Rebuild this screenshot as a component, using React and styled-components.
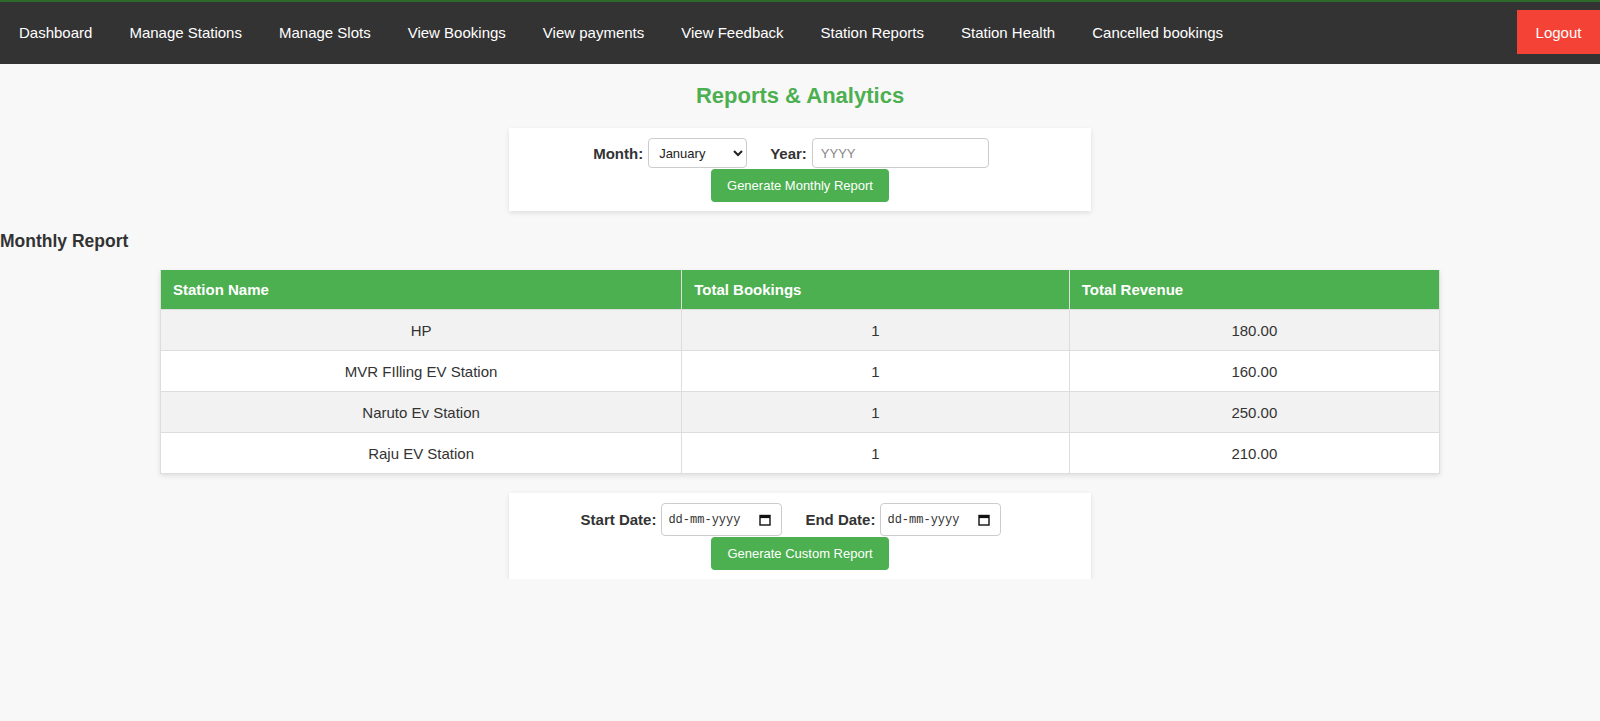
import React, { useState } from "react";
import styled, { createGlobalStyle } from "styled-components";

const links = [
  "Dashboard",
  "Manage Stations",
  "Manage Slots",
  "View Bookings",
  "View payments",
  "View Feedback",
  "Station Reports",
  "Station Health",
  "Cancelled bookings",
];

const rows = [
  { name: "HP", bookings: 1, revenue: "180.00" },
  { name: "MVR FIlling EV Station", bookings: 1, revenue: "160.00" },
  { name: "Naruto Ev Station", bookings: 1, revenue: "250.00" },
  { name: "Raju EV Station", bookings: 1, revenue: "210.00" },
];

const months = [
  "January", "February", "March", "April", "May", "June",
  "July", "August", "September", "October", "November", "December",
];

const CalendarIcon = () => (
  <svg width="12" height="12" viewBox="0 0 12 12">
    <rect x="1" y="1.5" width="10" height="9.5" fill="none" stroke="#111" strokeWidth="1.4" />
    <rect x="1" y="1.5" width="10" height="2.6" fill="#111" />
  </svg>
);

const DateField = () => (
  <DateBox>
    <DateText placeholder="dd-mm-yyyy" />
    <CalendarIcon />
  </DateBox>
);

const App = () => {
  const [month, setMonth] = useState("January");

  return (
    <>
      <GlobalStyle />
      <Nav>
        <Links>
          {links.map((l) => (
            <NavLink key={l} href="#">
              {l}
            </NavLink>
          ))}
        </Links>
        <Logout>Logout</Logout>
      </Nav>

      <Title>Reports &amp; Analytics</Title>

      <Card>
        <FormRow>
          <Label>Month:</Label>
          <Select value={month} onChange={(e) => setMonth(e.target.value)}>
            {months.map((m) => (
              <option key={m}>{m}</option>
            ))}
          </Select>
          <Label $gap>Year:</Label>
          <YearInput placeholder="YYYY" />
        </FormRow>
        <GreenButton>Generate Monthly Report</GreenButton>
      </Card>

      <Heading>Monthly Report</Heading>

      <Table>
        <colgroup>
          <col style={{ width: "40.75%" }} />
          <col style={{ width: "30.3%" }} />
          <col />
        </colgroup>
        <thead>
          <tr>
            <Th>Station Name</Th>
            <Th>Total Bookings</Th>
            <Th>Total Revenue</Th>
          </tr>
        </thead>
        <tbody>
          {rows.map((r, i) => (
            <Tr key={i} $odd={i % 2 === 0}>
              <Td>{r.name}</Td>
              <Td>{r.bookings}</Td>
              <Td>{r.revenue}</Td>
            </Tr>
          ))}
        </tbody>
      </Table>

      <Card $second>
        <FormRow>
          <Label>Start Date:</Label>
          <DateField />
          <Label $gap>End Date:</Label>
          <DateField />
        </FormRow>
        <GreenButton>Generate Custom Report</GreenButton>
      </Card>
    </>
  );
};

const GlobalStyle = createGlobalStyle`
  body {
    margin: 0;
    background: #f8f8f8;
    font-family: "Liberation Sans", Arial, sans-serif;
    color: #333;
  }
`;

const Nav = styled.nav`
  height: 62px;
  background: #333;
  border-top: 2px solid #2e6b2a;
  display: flex;
  align-items: center;
  justify-content: space-between;
`;

const Links = styled.div`
  display: flex;
  align-items: center;
  padding-left: 0.5px;
  margin-top: -2px;
`;

const NavLink = styled.a`
  color: #fff;
  text-decoration: none;
  font-size: 15px;
  padding: 0 18.5px;
`;

const Logout = styled.button`
  background: #f44336;
  color: #fff;
  border: none;
  font-family: inherit;
  font-size: 15px;
  width: 83px;
  height: 44px;
  margin-top: -2px;
  cursor: pointer;
`;

const Title = styled.h2`
  color: #4caf50;
  text-align: center;
  font-size: 22px;
  margin: 19px 0 19px;
`;

const Card = styled.div`
  width: 562px;
  margin: ${(p) => (p.$second ? "19px" : "0")} auto 0;
  background: #fff;
  padding: 10px 10px 9px;
  box-shadow: 0 2px 5px rgba(0, 0, 0, 0.1);
  display: flex;
  flex-direction: column;
  align-items: center;
  gap: 1px;
`;

const FormRow = styled.div`
  display: flex;
  align-items: center;
  margin-right: 18px;
`;

const Label = styled.label`
  font-weight: bold;
  font-size: 15px;
  margin-left: ${(p) => (p.$gap ? "23px" : "0")};
  margin-right: 5px;
`;

const Select = styled.select`
  width: 99px;
  height: 30px;
  border: 1px solid #ccc;
  border-radius: 4px;
  background: #fff;
  font-family: inherit;
  font-size: 13px;
  padding: 0 6px;
  color: #222;
`;

const YearInput = styled.input`
  width: 177px;
  height: 30px;
  box-sizing: border-box;
  border: 1px solid #ccc;
  border-radius: 4px;
  font-family: inherit;
  font-size: 13px;
  padding: 0 8px;
  &::placeholder {
    color: #888;
  }
`;

const DateBox = styled.div`
  width: 121px;
  height: 33px;
  box-sizing: border-box;
  border: 1px solid #ccc;
  border-radius: 4px;
  background: #fff;
  display: flex;
  align-items: center;
  padding: 0 10px 0 6px;
  gap: 4px;
`;

const DateText = styled.input`
  flex: 1;
  min-width: 0;
  border: none;
  outline: none;
  padding: 0;
  font-family: "Liberation Mono", "DejaVu Sans Mono", monospace;
  font-size: 12px;
  letter-spacing: 0;
  color: #333;
  &::placeholder {
    color: #333;
  }
`;

const GreenButton = styled.button`
  background: #4caf50;
  color: #fff;
  border: none;
  border-radius: 4px;
  font-family: inherit;
  font-size: 13px;
  width: 178px;
  height: 33px;
  cursor: pointer;
`;

const Heading = styled.h3`
  font-size: 17.5px;
  margin: 20px 0 18px;
`;

const Table = styled.table`
  width: 80%;
  margin: 0 auto;
  border-collapse: collapse;
  background: #fff;
  box-shadow: 0 2px 5px rgba(0, 0, 0, 0.1);
  font-size: 15px;
`;

const Th = styled.th`
  background: #4caf50;
  color: #fff;
  text-align: left;
  font-weight: bold;
  padding: 11px 12px;
  border: 1px solid #ddd;
  border-top: none;
`;

const Tr = styled.tr`
  background: ${(p) => (p.$odd ? "#f2f2f2" : "#fff")};
`;

const Td = styled.td`
  text-align: center;
  padding: 11.5px 12px;
  border: 1px solid #ddd;
  color: #333;
`;

export default App;
